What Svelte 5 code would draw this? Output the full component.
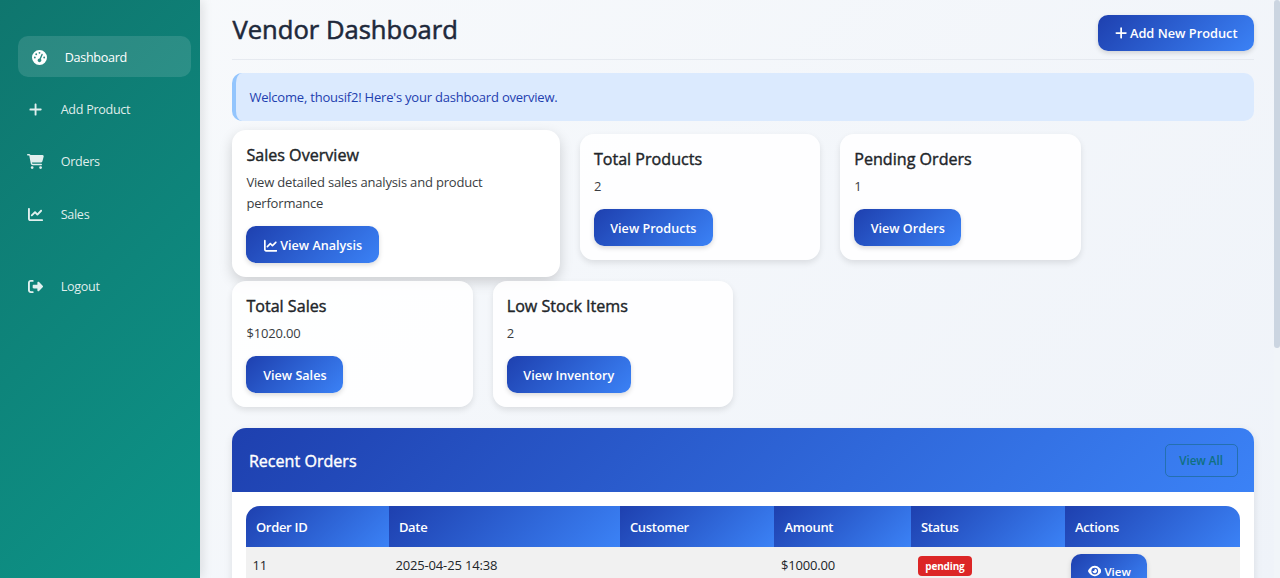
<script>
  const icons = {
    gauge: [512, 'M0 256a256 256 0 1 1 512 0A256 256 0 1 1 0 256zM288 96a32 32 0 1 0 -64 0 32 32 0 1 0 64 0zM256 416c35.3 0 64-28.7 64-64c0-17.4-6.9-33.1-18.1-44.6L366 161.7c5.3-12.1-.2-26.3-12.3-31.6s-26.3 .2-31.6 12.3L257.9 288c-.6 0-1.3 0-1.9 0c-35.3 0-64 28.7-64 64s28.7 64 64 64zM176 144a32 32 0 1 0 -64 0 32 32 0 1 0 64 0zM96 288a32 32 0 1 0 0-64 32 32 0 1 0 0 64zm352-32a32 32 0 1 0 -64 0 32 32 0 1 0 64 0z'],
    plus: [448, 'M256 80c0-17.7-14.3-32-32-32s-32 14.3-32 32V224H48c-17.7 0-32 14.3-32 32s14.3 32 32 32H192V432c0 17.7 14.3 32 32 32s32-14.3 32-32V288H400c17.7 0 32-14.3 32-32s-14.3-32-32-32H256V80z'],
    cart: [576, 'M0 24C0 10.7 10.7 0 24 0H69.5c22 0 41.5 12.8 50.6 32h411c26.3 0 45.5 25 38.6 50.4l-41 152.3c-8.5 31.4-37 53.3-69.5 53.3H170.7l5.4 28.5c2.2 11.3 12.1 19.5 23.6 19.5H488c13.3 0 24 10.7 24 24s-10.7 24-24 24H199.7c-34.6 0-64.3-24.6-70.7-58.5L77.4 54.5c-.7-3.8-4-6.5-7.9-6.5H24C10.7 48 0 37.3 0 24zM128 464a48 48 0 1 1 96 0 48 48 0 1 1 -96 0zm336-48a48 48 0 1 1 0 96 48 48 0 1 1 0-96z'],
    chart: [512, 'M64 64c0-17.7-14.3-32-32-32S0 46.3 0 64V400c0 44.2 35.8 80 80 80H480c17.7 0 32-14.3 32-32s-14.3-32-32-32H80c-8.8 0-16-7.2-16-16V64zm406.6 86.6c12.5-12.5 12.5-32.8 0-45.3s-32.8-12.5-45.3 0L320 210.7l-57.4-57.4c-12.5-12.5-32.8-12.5-45.3 0l-112 112c-12.5 12.5-12.5 32.8 0 45.3s32.8 12.5 45.3 0L240 221.3l57.4 57.4c12.5 12.5 32.8 12.5 45.3 0l128-128z'],
    logout: [512, 'M377.9 105.9L500.7 228.7c7.2 7.2 11.3 17.1 11.3 27.3s-4.1 20.1-11.3 27.3L377.9 406.1c-6.4 6.4-15 9.9-24 9.9c-18.7 0-33.9-15.2-33.9-33.9l0-62.1-128 0c-17.7 0-32-14.3-32-32l0-64c0-17.7 14.3-32 32-32l128 0 0-62.1c0-18.7 15.2-33.9 33.9-33.9c9 0 17.6 3.6 24 9.9zM160 96L96 96c-17.7 0-32 14.3-32 32l0 256c0 17.7 14.3 32 32 32l64 0c17.7 0 32 14.3 32 32s-14.3 32-32 32l-64 0c-53 0-96-43-96-96L0 128C0 75 43 32 96 32l64 0c17.7 0 32 14.3 32 32s-14.3 32-32 32z'],
    eye: [576, 'M288 32c-80.8 0-145.5 36.8-192.6 80.6C48.6 156 17.3 208 2.5 243.7c-3.3 7.9-3.3 16.7 0 24.6C17.3 304 48.6 356 95.4 399.4C142.5 443.2 207.2 480 288 480s145.5-36.8 192.6-80.6c46.8-43.5 78.1-95.4 93-131.1c3.3-7.9 3.3-16.7 0-24.6c-14.9-35.7-46.2-87.7-93-131.1C433.5 68.8 368.8 32 288 32zM144 256a144 144 0 1 1 288 0 144 144 0 1 1 -288 0zm144-64c0 35.3-28.7 64-64 64c-7.1 0-13.9-1.2-20.3-3.3c-5.5-1.8-11.9 1.6-11.7 7.4c.3 6.9 1.3 13.8 3.2 20.7c13.7 51.2 66.4 81.6 117.6 67.9s81.6-66.4 67.9-117.6c-11.1-41.5-47.8-69.4-88.6-71.1c-5.8-.2-9.2 6.1-7.4 11.7c2.1 6.4 3.3 13.2 3.3 20.3z']
  };

  const nav = [
    { icon: 'gauge', label: 'Dashboard', active: true },
    { icon: 'plus', label: 'Add Product' },
    { icon: 'cart', label: 'Orders' },
    { icon: 'chart', label: 'Sales' },
    { icon: 'logout', label: 'Logout', last: true }
  ];

  const cards = [
    { title: 'Sales Overview', text: 'View detailed sales analysis and product performance', action: 'View Analysis', icon: 'chart', raised: true, width: 133 },
    { title: 'Total Products', text: '2', action: 'View Products', width: 119 },
    { title: 'Pending Orders', text: '1', action: 'View Orders', width: 107 },
    { title: 'Total Sales', text: '$1020.00', action: 'View Sales', width: 97 },
    { title: 'Low Stock Items', text: '2', action: 'View Inventory', width: 124 }
  ];
</script>

{#snippet icon(name, size)}
  <svg class="icon" viewBox="0 0 {icons[name][0]} 512" width={(icons[name][0] / 512) * size} height={size} aria-hidden="true">
    <path fill="currentColor" d={icons[name][1]} />
  </svg>
{/snippet}

<div class="page">
  <nav class="sidebar">
    {#each nav as item}
      <a class="link" class:active={item.active} class:last={item.last} href="#top">
        <span class="slot">{@render icon(item.icon, 15)}</span>{item.label}
      </a>
    {/each}
  </nav>

  <main>
    <header>
      <h1>Vendor Dashboard</h1>
      <button class="btn add">{@render icon('plus', 14)}<span>Add New Product</span></button>
    </header>

    <div class="alert">Welcome, thousif2! Here's your dashboard overview.</div>

    <section class="cards">
      {#each cards as card}
        <article class="card" class:raised={card.raised}>
          <h2>{card.title}</h2>
          <p>{card.text}</p>
          <button class="btn" style="width: {card.width}px">
            {#if card.icon}{@render icon(card.icon, 13.5)}{/if}<span>{card.action}</span>
          </button>
        </article>
      {/each}
    </section>

    <section class="orders">
      <div class="orders-head">
        <h2>Recent Orders</h2>
        <button class="outline">View All</button>
      </div>
      <div class="table">
        <div class="row head">
          <div>Order ID</div><div>Date</div><div>Customer</div><div>Amount</div><div>Status</div><div>Actions</div>
        </div>
        <div class="row body">
          <div>11</div><div>2025-04-25 14:38</div><div></div><div>$1000.00</div>
          <div><span class="badge">pending</span></div>
          <div><button class="btn small">{@render icon('eye', 12)}<span>View</span></button></div>
        </div>
      </div>
    </section>
  </main>
  <div class="track"><div class="thumb"></div></div>
</div>

<style>
  :global(body) { margin: 0; overflow: hidden; }
  .page {
    display: flex;
    height: 578px;
    overflow: hidden;
    font-family: 'Open Sans', 'Noto Sans', sans-serif;
    font-size: 13px;
    color: #212529;
    background: linear-gradient(135deg, #f8fafc, #eff3f9);
  }
  .page * { box-sizing: border-box; }
  .icon { flex: none; display: block; }
  .sidebar {
    flex: none;
    width: 200px;
    padding: 36.4px 9px 0 18px;
    background: linear-gradient(135deg, #0f766e, #0d9488);
    box-shadow: 3px 0 10px rgba(0, 0, 0, 0.1);
  }
  .link {
    display: flex;
    align-items: center;
    height: 41px;
    margin-bottom: 11.4px;
    padding: 0.6px 0 0 7px;
    font-size: 12.6px;
    letter-spacing: -0.3px;
    color: rgba(255, 255, 255, 0.88);
    text-decoration: none;
    border-radius: 10px;
  }
  .slot { width: 21px; margin-right: 14.7px; display: flex; justify-content: center; }
  .active { padding-left: 11px; color: #fff; background: rgba(255, 255, 255, 0.12); }
  .last { margin-top: 31.2px; }

  main { flex: 1; min-width: 0; padding: 0 20.4px 0 32.4px; }
  header {
    display: flex;
    justify-content: space-between;
    height: 60px;
    border-bottom: 1px solid #e6eaf0;
  }
  h1 {
    margin: 11px 0 0;
    font-size: 25.6px;
    line-height: 38px;
    font-weight: 400;
    color: #1e293b;
    -webkit-text-stroke: 0.55px currentColor;
  }
  .btn {
    display: flex;
    align-items: center;
    justify-content: center;
    gap: 3px;
    height: 37px;
    padding: 1.6px 0 0;
    border: 0;
    border-radius: 10px;
    font: 600 12.6px 'Open Sans', 'Noto Sans', sans-serif;
    white-space: nowrap;
    color: #fff;
    background: linear-gradient(135deg, #1e40af, #3b82f6);
    box-shadow: 0 2px 5px rgba(0, 0, 0, 0.15);
  }
  .add { width: 156px; height: 36.5px; margin-top: 14.7px; padding: 0 0 0 1px; font-size: 12.8px; }
  .alert {
    height: 48px;
    margin-top: 13px;
    padding-left: 13px;
    line-height: 48px;
    letter-spacing: -0.21px;
    color: #1e40af;
    background: #dbeafe;
    border-left: 4px solid #93c5fd;
    border-radius: 10px;
  }
  .cards { display: flex; flex-wrap: wrap; align-items: flex-start; column-gap: 20px; margin-top: 13px; }
  .card {
    width: 240.4px;
    height: 126px;
    padding: 13.8px 14px;
    border-radius: 14px;
    background: rgba(255, 255, 255, 0.88);
    box-shadow: 0 3px 6px rgba(0, 0, 0, 0.1);
  }
  .raised {
    width: 327.5px;
    height: 147px;
    margin: -4px 0 4px;
    background: #fff;
    box-shadow: 0 5px 13px rgba(0, 0, 0, 0.17);
  }
  h2 {
    margin: 0;
    font-size: 16.1px;
    line-height: 22px;
    font-weight: 400;
    -webkit-text-stroke: 0.4px currentColor;
  }
  p { margin: 6px 0 12.4px; line-height: 21px; max-width: 260px; letter-spacing: -0.18px; color: #3a3d42; }
  .orders {
    height: 220px;
    margin-top: 21px;
    border-radius: 14px 14px 0 0;
    background: #fff;
    box-shadow: 0 3px 8px rgba(0, 0, 0, 0.1);
  }
  .orders-head {
    display: flex;
    align-items: center;
    justify-content: space-between;
    height: 64px;
    padding: 0 16px 0 16.5px;
    color: #fff;
    border-radius: 14px 14px 0 0;
    background: linear-gradient(135deg, #1e40af, #3b82f6);
  }
  .orders-head h2 { padding-top: 2px; }
  .outline {
    width: 73px;
    height: 33px;
    padding: 0;
    border: 1px solid #2470b0;
    border-radius: 5px;
    font: 600 11.6px 'Open Sans', 'Noto Sans', sans-serif;
    color: #0f7080;
    background: none;
  }
  .table { margin: 14px 13.5px 0; border-radius: 14px 14px 0 0; overflow: hidden; }
  .row { display: grid; grid-template-columns: 143px 231px 154.5px 136.5px 154px 1fr; }
  .head > div {
    height: 41px;
    padding-left: 10px;
    line-height: 42px;
    font-weight: 600;
    letter-spacing: -0.3px;
    color: #fff;
    background: linear-gradient(135deg, #1e40af, #3b82f6);
  }
  .body { height: 60px; background: #f1f1f1; }
  .body > div { padding: 7px 6.5px 0; line-height: 22px; letter-spacing: -0.15px; }
  .badge {
    display: block;
    width: 54px;
    height: 20px;
    margin: 2px 0 0 0.5px;
    border-radius: 4px;
    font-size: 10px;
    line-height: 20px;
    font-weight: 700;
    text-align: center;
    color: #fff;
    background: #dc2626;
  }
  .small { width: 76px; height: 34px; padding-top: 0; font-size: 11.5px; }
  .track { flex: none; width: 6px; background: #f1f5f9; }
  .thumb { height: 348px; border-radius: 3px; background: #cbd5e1; }
</style>
